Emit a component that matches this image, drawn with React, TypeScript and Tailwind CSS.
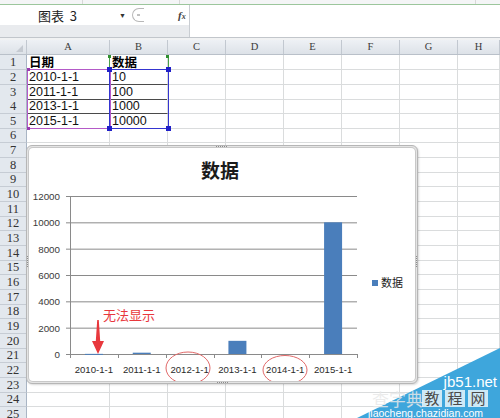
import React from "react";

const COLS = ["A", "B", "C", "D", "E", "F", "G", "H"];
const ROW_H = ["h-[15px]", "h-[15px]", "h-[14px]"];

const DATA: Record<number, [string, string, boolean?]> = {
  1: ["日期", "数据", true],
  2: ["2010-1-1", "10"],
  3: ["2011-1-1", "100"],
  4: ["2013-1-1", "1000"],
  5: ["2015-1-1", "10000"],
};

function Chart() {
  const base = 206;
  const H = 158;
  const x0 = 41;
  const x1 = 328;
  const cw = (x1 - x0) / 6;
  const ticks = [0, 2000, 4000, 6000, 8000, 10000, 12000];
  const cats = ["2010-1-1", "2011-1-1", "2012-1-1", "2013-1-1", "2014-1-1", "2015-1-1"];
  const vals = [10, 100, 0, 1000, 0, 10000];
  const font = "'Liberation Sans','Noto Sans CJK SC',sans-serif";
  return (
    <svg width="386" height="233" viewBox="0 0 386 233" className="block">
      <text x="191" y="30" textAnchor="middle" fontSize="19" fontWeight="bold" fill="#1a1a1a" fontFamily="'Noto Sans CJK SC',sans-serif">
        数据
      </text>
      {ticks.map((v) => {
        const y = base - (v / 12000) * H;
        return (
          <g key={v}>
            <line x1={x0 - 4} x2={x1} y1={y + 0.5} y2={y + 0.5} stroke="#8a8a8a" strokeWidth="1" />
            <text x="31" y={y + 4} textAnchor="end" fontSize="9.8" fill="#3a3a3a" fontFamily={font}>
              {v}
            </text>
          </g>
        );
      })}
      <line x1={x0 + 0.5} x2={x0 + 0.5} y1={base - H} y2={base + 1} stroke="#8a8a8a" strokeWidth="1" />
      {Array.from({ length: 7 }).map((_, i) => (
        <line key={i} x1={Math.round(x0 + i * cw) + 0.5} x2={Math.round(x0 + i * cw) + 0.5} y1={base} y2={base + 4} stroke="#8a8a8a" strokeWidth="1" />
      ))}
      {vals.map((v, i) => {
        const h = (v / 12000) * H;
        const cx = x0 + (i + 0.5) * cw;
        return v > 0 ? <rect key={i} x={cx - 9} y={base - h} width="18" height={Math.max(h, 1)} fill="#4a7ebb" /> : null;
      })}
      {cats.map((c, i) => (
        <text key={c} x={x0 + (i + 0.5) * cw} y="224.5" textAnchor="middle" fontSize="9.6" fill="#2a2a2a" fontFamily={font}>
          {c}
        </text>
      ))}
      <ellipse cx="159" cy="220" rx="22" ry="16" fill="none" stroke="#e06868" strokeWidth="1" />
      <ellipse cx="256" cy="222" rx="22" ry="14.5" fill="none" stroke="#e06868" strokeWidth="1" />
      <path d="M68.2,172 L69.8,172 L71.2,193 L75,193 L69,206 L63,193 L66.8,193 Z" fill="#e8383d" />
      <text x="74" y="172" fontSize="13" fill="#e8383d" fontFamily="'Noto Sans CJK SC',sans-serif">
        无法显示
      </text>
      <rect x="343" y="132" width="6" height="6" fill="#4a7ebb" />
      <text x="352" y="139" fontSize="11" fill="#1a1a1a" fontFamily="'Noto Sans CJK SC',sans-serif">
        数据
      </text>
    </svg>
  );
}

function Watermark() {
  return (
    <svg width="150" height="78" viewBox="0 0 150 78" className="block">
      <polygon points="7,78 150,8 150,78" fill="#3ea6dc" />
      <text x="147" y="47" textAnchor="end" fontSize="15" fill="#ffffff" fontFamily="'Liberation Sans',sans-serif">
        jb51.net
      </text>
      <text x="22" y="66" fontSize="17" fill="#e8e8e8" fillOpacity="0.85" fontFamily="'Noto Sans CJK SC',sans-serif">
        查字典
      </text>
      {["教", "程", "网"].map((c, i) => (
        <g key={c}>
          <rect x={72 + i * 23} y="50" width="20" height="17" fill="#ffffff" fillOpacity="0.75" />
          <text x={82 + i * 23} y="64" textAnchor="middle" fontSize="15" fill="#4a4a4a" fontFamily="'Noto Sans CJK SC',sans-serif">
            {c}
          </text>
        </g>
      ))}
      <text x="18" y="77" fontSize="10.5" fill="#ffffff" fontFamily="'Liberation Sans',sans-serif">
        jiaocheng.chazidian.com
      </text>
    </svg>
  );
}

export default function App() {
  const rows = Array.from({ length: 25 }, (_, i) => i + 1);
  const gridCols = "grid grid-cols-[27px_83px_58px_58px_58px_58px_58px_58px_1fr]";
  return (
    <div className="relative w-[500px] h-[418px] overflow-hidden bg-white font-['Liberation_Sans','Noto_Sans_CJK_SC',sans-serif]">
      {/* ribbon bottom strip */}
      <div className="flex h-[5px] bg-[#f4f5f6] border-b border-[#9cc69c]">
        <div className="w-[83px] border-r border-[#d8d8d8]" />
        <div className="w-[97px] border-r border-[#d8d8d8]" />
        <div className="w-[296px] border-r border-[#d8d8d8]" />
      </div>
      {/* formula bar */}
      <div className="flex h-[32px]">
        <div className="w-[190px] flex flex-col border-r border-[#c9cdd2]">
          <div className="h-[20px] bg-white flex items-center">
            <span className="ml-[38px] text-[13px] text-[#222] font-['Noto_Sans_CJK_SC',sans-serif] leading-none">图表&nbsp;&nbsp;3</span>
            <span className="ml-[42px] text-[7px] text-[#333] leading-none">▼</span>
            <span className="ml-[6px] w-[12px] h-[14px] rounded-l-full border-l border-t border-b border-[#b8b8b8] flex items-center justify-end">
              <span className="w-[3px] h-[2px] bg-[#c0c0c0] mr-[4px]" />
            </span>
            <span className="ml-[34px] text-[11px] italic font-bold text-[#444] font-['Liberation_Serif',serif] leading-none">
              f<span className="text-[8px]">x</span>
            </span>
          </div>
          <div className="flex-1 bg-[#e9ebee]" />
        </div>
        <div className="flex-1 bg-white" />
      </div>
      <div className="h-[3px] border-t border-[#c2c6cb] bg-[#f1f2f3]" />
      {/* column headers */}
      <div className={`${gridCols} h-[15px] bg-gradient-to-b from-[#eef1f5] to-[#dde2e8] border-b border-[#b9c0c9]`}>
        <div className="relative border-r border-[#c2c8d0]">
          <div className="absolute right-[3px] bottom-[2px] w-0 h-0 border-l-[7px] border-l-transparent border-b-[7px] border-b-[#c5cad1]" />
        </div>
        {COLS.map((c) => (
          <div key={c} className="border-r border-[#c2c8d0] flex items-center justify-center text-[10.5px] text-[#3a3a3a] font-['Liberation_Serif',serif] leading-none">
            {c}
          </div>
        ))}
      </div>
      {/* body rows */}
      {rows.map((r, i) => {
        const d = DATA[r];
        const dark = r >= 2 && r <= 4;
        return (
          <div key={r} className={`${gridCols} ${ROW_H[i % 3]}`}>
            <div className="bg-[#e3e8ee] border-r border-[#a9b5c4] border-b border-b-[#c6ccd4] flex items-center justify-center text-[12.5px] text-[#333] font-['Liberation_Serif',serif] leading-none">
              {r}
            </div>
            {COLS.map((c, ci) => {
              const txt = d ? (ci === 0 ? d[0] : ci === 1 ? d[1] : "") : "";
              const bold = d && d[2];
              const dataCell = ci <= 1 && dark;
              return (
                <div
                  key={c}
                  className={`border-r border-[#dadcdd] border-b ${dataCell ? "border-b-[#4a4a4a]" : "border-b-[#dadcdd]"} flex items-center pl-[2px] whitespace-nowrap leading-[14px] ${
                    bold ? "font-bold text-[12.5px] font-['Noto_Sans_CJK_SC',sans-serif] text-black" : "text-[12.5px] text-[#111]"
                  }`}
                >
                  {txt}
                </div>
              );
            })}
          </div>
        );
      })}

      {/* selection outlines */}
      <div className="absolute left-[27px] top-[69px] w-[84px] h-[60px] border border-[#b45ac8]" />
      <div className="absolute left-[109px] top-[69px] w-[60px] h-[60px] border border-[#3535d0]" />
      <div className="absolute left-[109px] top-[55px] w-[60px] h-[15px] border-l border-r border-[#48a048]" />
      <div className="absolute left-[108px] top-[55px] w-[3px] h-[3px] bg-[#2f8f2f]" />
      <div className="absolute left-[166px] top-[55px] w-[3px] h-[3px] bg-[#2f8f2f]" />
      <div className="absolute left-[107px] top-[67px] w-[5px] h-[5px] bg-[#2020c8]" />
      <div className="absolute left-[166px] top-[67px] w-[5px] h-[5px] bg-[#2020c8]" />
      <div className="absolute left-[107px] top-[126px] w-[5px] h-[5px] bg-[#2020c8]" />
      <div className="absolute left-[166px] top-[126px] w-[5px] h-[5px] bg-[#2020c8]" />
      <div className="absolute left-[27px] top-[68px] w-[3px] h-[3px] bg-[#9a3ab0]" />
      <div className="absolute left-[27px] top-[127px] w-[3px] h-[3px] bg-[#9a3ab0]" />

      {/* chart object */}
      <div className="absolute left-[26px] top-[145px] w-[392px] h-[239px] rounded-[6px] border border-[#b6b6b6] bg-[#e4e4e4] p-[2px] shadow-[1px_1px_2px_rgba(0,0,0,0.15)]">
        <div className="absolute left-[189px] top-[0px] w-[11px] border-t border-dotted border-[#8c8c8c]" />
        <div className="absolute left-[190px] bottom-[0px] w-[11px] border-t border-dotted border-[#8c8c8c]" />
        <div className="absolute left-[0px] top-[110px] h-[11px] border-l border-dotted border-[#8c8c8c]" />
        <div className="absolute right-[0px] top-[110px] h-[11px] border-l border-dotted border-[#8c8c8c]" />
        <div className="w-full h-full bg-white rounded-[4px] shadow-[0_0_0_1px_#c8c8c8] overflow-hidden">
          <Chart />
        </div>
      </div>

      {/* watermark */}
      <div className="absolute left-[350px] top-[340px]">
        <Watermark />
      </div>
    </div>
  );
}
